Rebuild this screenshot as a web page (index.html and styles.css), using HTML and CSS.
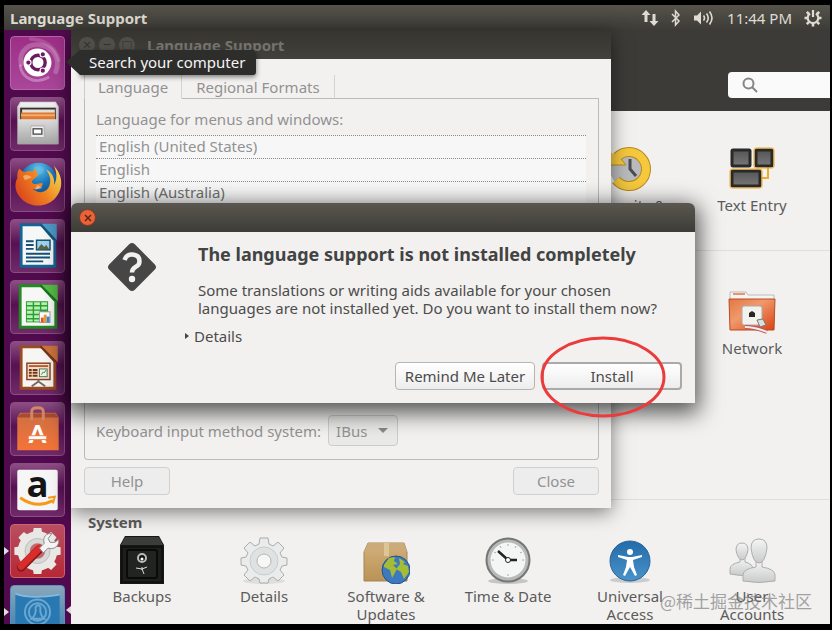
FILE: index.html
```html
<!DOCTYPE html>
<html lang="en">
<head>
<meta charset="utf-8">
<title>Language Support</title>
<link rel="stylesheet" href="styles.css">
</head>
<body>
<div class="screen">
  <header class="panel">
    <span class="panel-title">Language Support</span>
    <div class="indicators">
      <svg width="18" height="18" viewBox="0 0 18 18" fill="#dfdbd2"><path d="M5 1l4.500 5H6.500v7H3.500V6H.5zM13 17l-4.500-5h3V5h3v7h3z"/></svg>
      <svg width="10" height="18" viewBox="0 0 10 18" fill="none" stroke="#dfdbd2" stroke-width="1.500"><path d="M1 5l7 7-3.500 4V2L8 6l-7 7"/></svg>
      <svg width="22" height="18" viewBox="0 0 22 18" fill="none" stroke="#dfdbd2" stroke-width="1.600"><path d="M1 6.500h3l4-4v13l-4-4H1z" fill="#dfdbd2" stroke="none"/><path d="M10.500 6.500q2 2.500 0 5M13.500 4.500q3.500 4.500 0 9M16.500 2.500q5 6.500 0 13"/></svg>
      <time>11:44 PM</time>
      <svg width="18" height="18" viewBox="0 0 18 18" fill="none" stroke="#dfdbd2"><path d="M6 4.500a5.300 5.300 0 1 0 6 0M9 1v7" stroke-width="2.200"/><path d="M2.800 2.800l2 2M15.200 2.800l-2 2M.5 9H4M17.500 9H14M2.800 15.200l2-2M15.200 15.200l-2-2M9 17.500V14" stroke-width="2.600"/></svg>
    </div>
  </header>
  <div class="workspace">
    <nav class="launcher" aria-label="Launcher">
      <a class="tile dash" href="#"><svg viewBox="0 0 54 54"><g fill="none" stroke="#fff" stroke-linecap="round"><path d="M10 28C7 14 19 5 33 9c14 4 17 18 13 27" stroke-opacity=".22" stroke-width="5"/><path d="M38 42C24 50 11 42 9 30" stroke-opacity=".3" stroke-width="3"/><path d="M20 2C34 3 46 10 49 24" stroke-opacity=".15" stroke-width="4"/></g><circle cx="27" cy="26.500" r="14.500" fill="#fff"/><circle cx="27.500" cy="26.500" r="7.500" fill="none" stroke="#6b1b60" stroke-width="3.500"/><g fill="#6b1b60" stroke="#fff" stroke-width="1.200"><circle cx="17.500" cy="26.500" r="2.800"/><circle cx="32.500" cy="18" r="2.800"/><circle cx="32.500" cy="35" r="2.800"/></g></svg></a>
      <a class="tile" href="#"><svg viewBox="0 0 54 54"><defs><linearGradient id="cab" x2="0" y2="1"><stop stop-color="#ddd"/><stop offset="1" stop-color="#a4a4a4"/></linearGradient></defs><path d="M9 4h37l3 5v39H6V9z" fill="url(#cab)"/><path d="M8 9l2-4h35l2 4z" fill="#eee"/><path d="M9 10h37v14H9z" fill="#3b3027"/><path d="M11 12h34v12H11z" fill="#e2e0da"/><path d="M10 15h35v9H10z" fill="#df7932"/><path d="M10 17h35v2H10z" fill="#f4ad6c"/><path d="M7 22h41v26H7z" fill="url(#cab)"/><rect x="20" y="29" width="14" height="12" rx="1" fill="#eee" stroke="#aaa"/><rect x="22.500" y="32" width="9" height="5.500" fill="#fff" stroke="#555" stroke-width="1.500"/></svg></a>
      <a class="tile" href="#"><svg viewBox="0 0 54 54"><defs><radialGradient id="globe" cx=".5" cy=".15" r=".8"><stop stop-color="#5cc3ee"/><stop offset=".5" stop-color="#1874b8"/><stop offset="1" stop-color="#123b7d"/></radialGradient><linearGradient id="fox" x1="0" y1=".7" x2="1" y2=".2"><stop stop-color="#d9441c"/><stop offset=".5" stop-color="#f08021"/><stop offset="1" stop-color="#ffe14d"/></linearGradient></defs><circle cx="28" cy="24" r="20" fill="url(#globe)"/><path d="M23 9q6-3 11 1l-2 5-7 2z" fill="#71bee1" opacity=".5"/><path d="M8 10l5 4c3-2 6-2 9-1l4-4c-1 4 0 5 2 8l-5 4c-3 2-2 5 2 5l7-1c1 5-5 7-10 6 7 7 17 3 18-6 1-5-1-9-4-14 8 4 9 12 8 16 4-6 3-14 0-20 11 12 9 25 2 33-9 11-27 11-36 1C3 34 3 25 6 20c0-4 0-7 2-10z" fill="url(#fox)"/><path d="M12 18q4-3 9 1l-7 3zM27 27l5 3-8 2z" fill="#fbd29a" opacity=".6"/></svg></a>
      <a class="tile" href="#"><svg viewBox="0 0 54 54"><path d="M10 5h23l12 13v30H10z" fill="#f6f8f8" stroke="#176494" stroke-width="3"/><path d="M31 4h16v17z" fill="#4c9bc7"/><path d="M31 4l16 17h-4L29 5z" fill="#13547d"/><path d="M15 22h8M15 26h8M15 30h8M15 35h25M15 39h25M15 43h18" stroke="#174f76" stroke-width="2"/><rect x="26" y="21" width="14" height="10" fill="#9bd3ee" stroke="#194d6d" stroke-width="1.500"/><path d="M27 30l4-5 3 3 2-2 3 4z" fill="#61613a"/></svg></a>
      <a class="tile" href="#"><svg viewBox="0 0 54 54"><path d="M9 5h24l13 13v30H9z" fill="#f7f8f6" stroke="#238b23" stroke-width="3"/><path d="M31 4h17v17z" fill="#55bd46"/><path d="M31 4l17 17h-4L29 5z" fill="#167619"/><path d="M15 21h23v22H15z" fill="#2a9f34"/><g fill="#baf0b2"><path d="M16 22h6v3h-6zM23.500 22h6v3h-6zM31 22h6v3h-6zM16 26.500h6v3h-6zM23.500 26.500h6v3h-6zM31 26.500h6v3h-6zM16 31h6v3h-6zM23.500 31h6v3h-6zM16 35.500h6v3h-6zM23.500 35.500h6v3h-6zM16 40h6v2h-6zM23.500 40h6v2h-6z"/></g><rect x="29" y="32" width="11" height="11" fill="#fff" stroke="#999"/><path d="M32 43v-5" stroke="#e5542d" stroke-width="3"/><path d="M35 43v-8" stroke="#ec9c30" stroke-width="3"/><path d="M38 43v-6" stroke="#348bcd" stroke-width="3"/></svg></a>
      <a class="tile" href="#"><svg viewBox="0 0 54 54"><path d="M10 5h23l12 13v30H10z" fill="#f8f6f2" stroke="#9b4b22" stroke-width="3"/><path d="M31 4h17v17z" fill="#cd7540"/><path d="M31 4l17 17h-4L29 5z" fill="#77351a"/><rect x="16" y="22" width="24" height="17" fill="#f6dfcd" stroke="#87401f" stroke-width="1.500"/><path d="M18 25h20" stroke="#b75c33" stroke-width="2"/><path d="M18 29h3M22 29h5M18 32h3M22 32h5M18 35h3M22 35h5" stroke="#753414" stroke-width="2"/><rect x="29" y="28" width="8" height="8" fill="#eff4e9" stroke="#4d7451"/><path d="M31 34l2-3 1 1 2-3" fill="none" stroke="#3b8d35"/><path d="M28 39v2l-7 5M28 41l7 5" fill="none" stroke="#706a65" stroke-width="2"/></svg></a>
      <a class="tile" href="#"><svg viewBox="0 0 54 54"><defs><linearGradient id="bag" x2="0" y2="1"><stop stop-color="#ce6f43"/><stop offset="1" stop-color="#f47438"/></linearGradient></defs><path d="M9 10h37l3 5v34H6V15z" fill="url(#bag)"/><path d="M6 15l4-4h35l4 4z" fill="#a74c32"/><path d="M21 18V9q0-4 6-4t6 4v9" fill="none" stroke="#d38666" stroke-width="3"/><text x="27" y="42" text-anchor="middle" font-family="Lato" font-weight="900" font-size="26" fill="#fff">A</text><path d="M17 36h20" stroke="#ef7c46" stroke-width="5"/><path d="M18 36h18" stroke="#fff" stroke-width="3"/></svg></a>
      <a class="tile" href="#"><svg viewBox="0 0 54 54"><rect x="6" y="6" width="42" height="42" rx="2" fill="#f6f6f6"/><text x="27" y="34" text-anchor="middle" font-family="Open Sans" font-weight="bold" font-size="38" fill="#151515">a</text><path d="M9 35q17 12 34 3" fill="none" stroke="#f79918" stroke-width="3"/><path d="M38 35l7-1-2 7" fill="none" stroke="#f79918" stroke-width="2"/></svg></a>
      <a class="tile settings" href="#"><svg viewBox="0 0 54 54"><g transform="translate(27 27)"><circle r="15" fill="none" stroke="#e9e8e5" stroke-width="11"/><g fill="#e9e8e5"><path id="tooth" d="M-5-17l1-7h8l1 7z"/><use href="#tooth" transform="rotate(45)"/><use href="#tooth" transform="rotate(90)"/><use href="#tooth" transform="rotate(135)"/><use href="#tooth" transform="rotate(180)"/><use href="#tooth" transform="rotate(225)"/><use href="#tooth" transform="rotate(270)"/><use href="#tooth" transform="rotate(315)"/></g><circle r="13" fill="#d8d8d6" stroke="#bbb"/><circle r="8" fill="#c06a70"/></g><path d="M10 44l19-19" stroke="#891818" stroke-width="9" stroke-linecap="round"/><path d="M10 43l19-19" stroke="#d92d2b" stroke-width="7" stroke-linecap="round"/><path d="M29 24l5-5c-2-6 2-11 8-10l-4 5 2 4 5 0 4-3c1 7-5 11-11 9l-5 5z" fill="#f4f4f4" stroke="#888"/></svg></a>
      <a class="tile software" href="#"><svg viewBox="0 0 54 54"><path d="M4 8q15 6 46 1v45H4z" fill="#2878b2"/><path d="M4 8q15 6 46 1" fill="none" stroke="#83b8dc" stroke-width="2"/><g fill="none" stroke="#6ba8d1" stroke-width="2"><circle cx="27" cy="27" r="13"/><circle cx="27" cy="27" r="9"/><path d="M21 34q5-4 4-12 3-4 5 0-1 8 4 12z"/></g></svg></a>
    </nav>
    <main class="desktop">
      <section class="control-center">
        <div class="toolbar"><label class="search"><svg width="16" height="16" viewBox="0 0 16 16" fill="none" stroke="#858585" stroke-width="2"><circle cx="6.500" cy="6.500" r="5"/><path d="M10 10l5 5"/></svg><input type="search" aria-label="Search settings"></label></div>
        <div class="group personal">
          <a class="item fifth" href="#"><svg width="48" height="48" viewBox="0 0 48 48"><circle cx="23" cy="24" r="19" fill="#b9bbbd"/><path d="M11 12a17 17 0 1 1-1 23" fill="none" stroke="#b58a1c" stroke-width="10"/><path d="M11 12a17 17 0 1 1-1 23" fill="none" stroke="#f5c83d" stroke-width="8"/><path d="M-2 1l9 8 8 4 5 7H0z" fill="#f5c83d"/><path d="M15 14l5 6H0" fill="none" stroke="#b58a1c"/><path d="M24 14v10l6 7" fill="none" stroke="#4a4c52" stroke-width="3"/></svg><span>Security &amp;</span></a>
          <a class="item sixth" href="#"><svg width="48" height="48" viewBox="0 0 48 48"><defs><linearGradient id="key" x2="0" y2="1"><stop stop-color="#555"/><stop offset="1" stop-color="#777"/></linearGradient></defs><path d="M40 22v11h-7" fill="none" stroke="#edac2b" stroke-width="2"/><g fill="url(#key)" stroke="#292929" stroke-width="3"><rect x="4" y="5" width="18" height="16" rx="1"/><rect x="28" y="5" width="16" height="16" rx="1"/><rect x="4" y="26" width="28" height="15" rx="1"/></g><g fill="none" stroke="#f4aa20"><rect x="26" y="3" width="20" height="20" rx="2"/><rect x="2" y="24" width="32" height="19" rx="2"/></g></svg><span>Text Entry</span></a>
        </div>
        <div class="group hardware">
          <a class="item sixth" href="#"><svg width="48" height="48" viewBox="0 0 48 48"><defs><linearGradient id="folder" x2="1" y2="1"><stop stop-color="#e47643"/><stop offset=".4" stop-color="#f09a6c"/><stop offset="1" stop-color="#d94213"/></linearGradient></defs><path d="M2 12V4h16l2 3h26v6z" fill="#f4f4f4" stroke="#bbb"/><path d="M5 6h12" stroke="#e7956c" stroke-width="2"/><path d="M1 11h46l-1 31H2z" fill="url(#folder)" stroke="#b84d24"/><rect x="14" y="18" width="20" height="19" rx="2" fill="#f3f1ed" stroke="#aaa"/><path d="M21 29v-4l3-2 3 2v4z" fill="#252525"/><path d="M17 39q10 0 22 5" fill="none" stroke="#c45256" stroke-width="4"/><path d="M17 39q10 0 22 5" fill="none" stroke="#eee" stroke-width="2"/><path d="M29 32l6-1 3 6-6 2z" fill="#ddd" stroke="#777"/></svg><span>Network</span></a>
        </div>
        <div class="group system">
          <h2>System</h2>
          <a class="item" href="#"><svg width="48" height="48" viewBox="0 0 48 48"><path d="M7 0h34l5 9v39H2V9z" fill="#171817"/><path d="M7 1h34l4 8H3z" fill="#3b3d3b"/><rect x="4" y="11" width="40" height="35" fill="#1d1f1d" stroke="#090909"/><rect x="9" y="14" width="30" height="28" rx="2" fill="#222422" stroke="#0a0a0a" stroke-width="2"/><circle cx="24" cy="22" r="4" fill="#111" stroke="#bbb" stroke-width="2"/><circle cx="24" cy="23" r="1.500" fill="#fff"/><path d="M24 34v-3M18 32l6 1 5-2M24 33l2 5" fill="none" stroke="#ddd"/></svg><span>Backups</span></a>
          <a class="item" href="#"><svg width="48" height="48" viewBox="0 0 48 48"><ellipse cx="24" cy="45" rx="21" ry="3" fill="#ccc" opacity=".5"/><g transform="translate(24 24)"><path d="M-4-22h8l1 6 4 2 5-4 6 6-4 5 2 4 5 1v7l-5 1-2 4 4 5-6 6-5-4-4 2-1 4h-8l-1-4-4-2-5 4-6-6 4-5-2-4-5-1v-7l5-1 2-4-4-5 6-6 5 4 4-2z" fill="#eaebeb" stroke="#a9abad"/><circle cy="1" r="14" fill="#dfe1e2" stroke="#cacccd"/><circle cy="1" r="7" fill="#f7f7f6" stroke="#b5b5b5"/></g></svg><span>Details</span></a>
          <a class="item" href="#"><svg width="48" height="48" viewBox="0 0 48 48"><defs><linearGradient id="box" x2="0" y2="1"><stop stop-color="#d2b17b"/><stop offset="1" stop-color="#b99256"/></linearGradient></defs><path d="M6 7h36l3 9v29H2V16z" fill="url(#box)" stroke="#a58557"/><path d="M6 7h36l3 9H2z" fill="#cdab78"/><path d="M22 7h5v13h-5z" fill="#ddc596"/><circle cx="34" cy="34" r="14" fill="#3c79be" stroke="#235386"/><path d="M22 29l5-7 6-1-1 4 4 3-5 1 4 4-5 9-2-8-6-3zM37 22l6 4-2 2 5 2 1 6-5 7-3-7-5-3 4-5z" fill="#a5bd35"/></svg><span>Software &amp; Updates</span></a>
          <a class="item" href="#"><svg width="48" height="48" viewBox="0 0 48 48"><ellipse cx="24" cy="45" rx="20" ry="3" fill="#999" opacity=".5"/><circle cx="24" cy="24" r="21" fill="#f4f5f5" stroke="#747775" stroke-width="3"/><circle cx="24" cy="24" r="19" fill="none" stroke="#b7bab8" stroke-width="3"/><path d="M24 8v2M24 38v2M8 24h2M38 24h2M16 10l1 2M32 10l-1 2M10 16l2 1M38 16l-2 1" stroke="#aaa"/><path d="M14 15l10 9h9" fill="none" stroke="#222" stroke-width="2.500"/><circle cx="24" cy="24" r="2.500" fill="#fff" stroke="#222"/></svg><span>Time &amp; Date</span></a>
          <a class="item" href="#"><svg width="48" height="48" viewBox="0 0 48 48"><defs><linearGradient id="access" x2="0" y2="1"><stop stop-color="#246ca9"/><stop offset="1" stop-color="#4a92c9"/></linearGradient></defs><ellipse cx="24" cy="44" rx="20" ry="3" fill="#ccc"/><circle cx="24" cy="25" r="20" fill="url(#access)" stroke="#28659a"/><circle cx="24" cy="16" r="3" fill="#fff"/><path d="M12 19l10 2h4l10-2v2l-9 3 1 7 3 8-2 1-5-9-5 9-2-1 3-8 1-7-9-3z" fill="#fff"/></svg><span>Universal Access</span></a>
          <a class="item" href="#"><svg width="48" height="48" viewBox="0 0 48 48"><defs><linearGradient id="person" x2="0" y2="1"><stop stop-color="#f5f5f5"/><stop offset="1" stop-color="#c9caca"/></linearGradient></defs><g fill="url(#person)" stroke="#acaeae"><path d="M2 38v-5q0-5 10-7v-4h5v4q8 2 8 7v5q-12 3-23 0z"/><path d="M14 7q6 0 6 7-2 10-6 10t-6-10q0-7 6-7z"/><path d="M15 45v-6q0-6 13-8v-6h6v6q13 2 13 8v6q-16 3-32 0z"/><path d="M31 3q8 0 8 9-2 15-8 15t-8-15q0-9 8-9z"/></g></svg><span>User Accounts</span></a>
        </div>
      </section>

      <section class="window language-window" aria-label="Language Support">
        <div class="titlebar muted">
          <i class="dot">×</i><i class="dot">−</i><i class="dot">□</i><h1>Language Support</h1>
        </div>
        <div class="language-body">
          <div class="tabs"><button class="tab active" type="button">Language</button><button class="tab" type="button">Regional Formats</button></div>
          <div class="sheet">
            <div>
              <p>Language for menus and windows:</p>
              <ul class="languages"><li>English (United States)</li><li>English</li><li class="last">English (Australia)</li></ul>
            </div>
            <div class="input-method"><label for="ime">Keyboard input method system:</label><span class="select-wrap"><select id="ime"><option>IBus</option></select></span></div>
          </div>
          <div class="actions"><button class="faded" type="button">Help</button><button class="faded" type="button">Close</button></div>
        </div>
      </section>

      <section class="window dialog" role="dialog" aria-labelledby="dialog-title">
        <div class="titlebar"><button class="close" type="button" aria-label="Close dialog"><svg width="8" height="8" viewBox="0 0 8 8" stroke="#5b2715" stroke-width="1.500"><path d="M1 1l6 6M7 1L1 7"/></svg></button></div>
        <div class="dialog-body">
          <svg class="question" width="50" height="50" viewBox="0 0 50 50"><rect x="7" y="7" width="36" height="36" rx="4" fill="#464646" transform="rotate(45 25 25)"/><path d="M17.500 18q2-6 8-5.500 7 .5 7 7 0 3.500-4 5.500-3.500 2-3.500 5.500" fill="none" stroke="#f2f1f0" stroke-width="4.500"/><circle cx="25" cy="37" r="3.200" fill="#f2f1f0"/></svg>
          <div class="message">
            <h2 id="dialog-title">The language support is not installed completely</h2>
            <p>Some translations or writing aids available for your chosen<br>languages are not installed yet. Do you want to install them now?</p>
            <details><summary>Details</summary></details>
          </div>
          <div class="choices"><button type="button">Remind Me Later</button><button class="default" type="button">Install</button></div>
        </div>
      </section>
      <svg class="highlight" width="126" height="82" viewBox="0 0 126 82" fill="none" stroke="#eb3b3b" stroke-width="3"><ellipse cx="63" cy="41" rx="61" ry="39"/></svg>
      <div class="tooltip" role="tooltip">Search your computer</div>
      <span class="watermark">@稀土掘金技术社区</span>
    </main>
  </div>
</div>
</body>
</html>
```
FILE: styles.css
```css
* { box-sizing: border-box; }
body {
  margin: 0;
  height: 100vh;
  padding: 5px 2px 6px 4px;
  background: #000;
  color: #4c4c4c;
  font: 15px/18px "Noto Sans", "Open Sans", sans-serif;
}
h1, h2, p, ul { margin: 0; padding: 0; }
a { color: inherit; text-decoration: none; }
button, input, select { font: inherit; color: inherit; }
svg { flex: none; }
.screen { display: flex; flex-direction: column; height: 100%; overflow: hidden; }

.panel {
  display: flex;
  flex: none;
  align-items: center;
  justify-content: space-between;
  height: 25px;
  padding: 0 8px 0 6px;
  background: linear-gradient(#55534b, #3c3b37);
  color: #dfdbd2;
}
.panel-title { font-size: 15px; font-weight: bold; }
.indicators { display: flex; align-items: center; gap: 12px; }

.workspace { display: flex; flex: 1; min-height: 0; }
.launcher {
  display: flex;
  flex: none;
  flex-direction: column;
  gap: 7px;
  width: 67px;
  padding: 6px 6px 0;
  overflow: hidden;
  background: #520a4f;
}
.tile {
  flex: none;
  height: 54px;
  border: 1px solid #86507f;
  border-radius: 4px;
  background: linear-gradient(#8c4d84, #571052 45%, #712a69);
}
.tile svg { display: block; width: 100%; height: 100%; overflow: visible; }
.dash { border-color: #b764a9; background: linear-gradient(#9e2e86, #a9479a); }
.settings { border-color: #c76573; background: linear-gradient(#b94e61, #b72836); }
.software { border-color: #5692bd; background: linear-gradient(#8aa7bb, #367daf); }
.settings::before, .software::before, .software::after {
  content: "";
  position: absolute;
  left: 4px;
  margin-top: 22px;
  border: 4px solid transparent;
  border-left: 5px solid #ddd;
  border-right: 0;
}
.software::after { left: 66px; margin-top: -32px; border-left: 0; border-right: 5px solid #ddd; }

.desktop { position: relative; flex: 1; min-width: 0; background: #f2f1f0; }
.control-center { color: #5b5b5b; }
.toolbar { display: flex; justify-content: flex-end; height: 81px; padding-top: 42px; background: #3c3b37; }
.search { display: flex; align-items: center; width: 102px; height: 26px; padding-left: 14px; border-radius: 4px 0 0 4px; background: #fafafa; }
.search input { width: 60px; border: 0; outline: 0; background: transparent; }
.group { display: grid; grid-template-columns: repeat(6, 122px); padding-left: 10px; align-content: start; border-bottom: 1px solid #dededc; }
.personal { height: 140px; padding-top: 34px; }
.hardware { height: 249px; padding-top: 37px; }
.system { border: 0; padding-top: 13px; }
.system h2 { grid-column: 1 / -1; padding-left: 7px; margin-bottom: 5px; font-size: 15px; line-height: 18px; }
.item { display: flex; flex-direction: column; align-items: center; gap: 3px; text-align: center; }
.item span { max-width: 90px; }
.fifth { grid-column: 5; }
.sixth { grid-column: 6; }

.window { position: absolute; background: #f2f1f0; }
.titlebar { display: flex; align-items: center; height: 29px; padding: 0 8px; background: linear-gradient(#59574f, #3d3c37); }
.language-window { top: 0; left: 0; width: 540px; color: #929292; box-shadow: 0 4px 18px rgba(0, 0, 0, .5); }
.titlebar.muted { gap: 4px; background: linear-gradient(#35342f, #42413c); color: #75736d; }
.muted h1 { margin-left: 8px; font-size: 15px; }
.dot { width: 16px; height: 16px; border-radius: 50%; background: #504e48; color: #34332f; text-align: center; font-style: normal; line-height: 15px; }
.language-body { padding: 16px 12px 13px 13px; }
.tabs { display: flex; height: 24px; border-left: 1px solid #ccc; }
.tab { padding: 0 14px; border: 1px solid #d4d3d1; border-width: 0 1px 1px 0; border-bottom-color: #bbb; background: transparent; }
.tab.active { padding: 0 13px; border-bottom-color: transparent; }
.tabs::after { content: ""; flex: 1; border-bottom: 1px solid #bbb; }
.sheet { display: flex; flex-direction: column; justify-content: space-between; height: 361px; padding: 11px 12px 13px 11px; border: 1px solid #bbb; border-top: 0; border-radius: 0 0 4px 4px; }
.languages { margin-top: 7px; list-style: none; }
.languages li { height: 23px; padding: 1px 3px; border-top: 1px dotted #888; background: #f7f7f7; }
.languages .last { color: #707070; }
.input-method { display: flex; align-items: center; gap: 7px; }
.select-wrap { position: relative; }
.select-wrap::after { content: ""; position: absolute; right: 10px; top: 13px; border: 5px solid transparent; border-top-color: #888; pointer-events: none; }
select { appearance: none; width: 70px; height: 31px; padding: 0 7px; border: 1px solid #ccc; border-radius: 4px; background: #e9e9e8; }
.actions { display: flex; justify-content: space-between; margin-top: 7px; }
.actions button { width: 86px; height: 28px; border: 1px solid #d0d0d0; border-radius: 4px; background: #ededed; }

.dialog { top: 173px; left: 0; width: 624px; border-radius: 6px 6px 0 0; box-shadow: 0 6px 22px 4px rgba(0, 0, 0, .65); }
.dialog .titlebar { border-radius: 6px 6px 0 0; }
.close { display: grid; place-items: center; width: 17px; height: 17px; padding: 0; border: 1px solid #7b3824; border-radius: 50%; background: #ec6238; }
.dialog-body { display: grid; grid-template-columns: 50px 1fr; column-gap: 41px; padding: 10px 13px 13px 36px; }
.message h2 { color: #434343; font-size: 18px; line-height: 24px; }
.message p { margin-top: 15px; }
details { margin: 10px 0 0 -13px; }
summary { display: flex; align-items: center; gap: 5px; width: max-content; }
summary::before { content: ""; border: 3px solid transparent; border-left: 4px solid #444; border-right: 0; }
.choices { grid-column: 1 / -1; display: flex; justify-content: flex-end; gap: 7px; margin-top: 17px; }
.choices button { width: 140px; height: 28px; padding: 0; border: 1px solid #b5b5b3; border-radius: 4px; background: linear-gradient(#fff, #ededed); }
.choices .default { border: 2px solid #aaa; }

.highlight { position: absolute; left: 469px; top: 306px; pointer-events: none; }
.tooltip { position: absolute; left: 9px; top: 20px; height: 25px; padding: 3px 11px 4px 9px; border-radius: 0 3px 3px 0; background: #2d2d2b; color: #f5f5f5; box-shadow: 0 2px 5px rgba(0, 0, 0, .5); }
.tooltip::before { content: ""; position: absolute; right: 100%; top: 0; border: solid transparent; border-width: 12px 14px 13px 0; border-right-color: #2d2d2b; }
.watermark { position: absolute; right: 18px; bottom: 13px; color: #777; opacity: .65; font: 17px/20px "Noto Sans CJK SC", sans-serif; }
```
